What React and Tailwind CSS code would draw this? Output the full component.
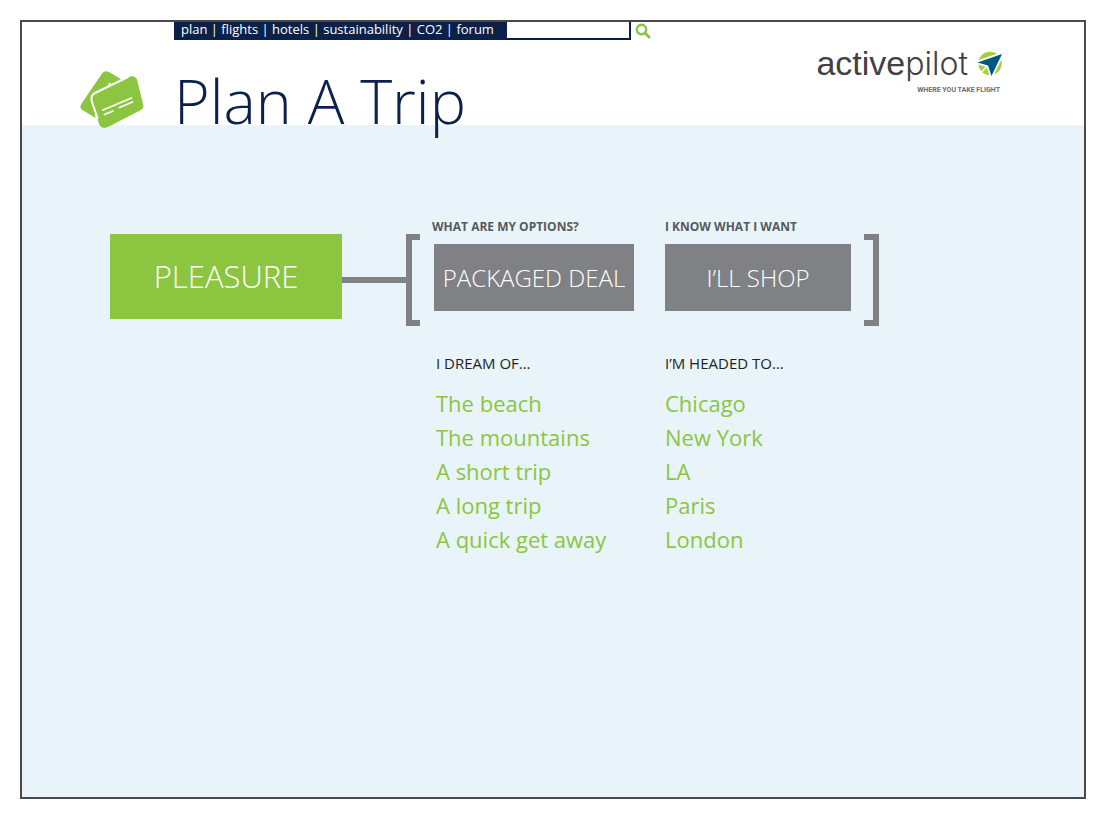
import { useState } from "react";

const navLinks = ["plan", "flights", "hotels", "sustainability", "CO2", "forum"];

const options = [
  {
    question: "WHAT ARE MY OPTIONS?",
    action: "PACKAGED DEAL",
    prompt: "I DREAM OF…",
    choices: ["The beach", "The mountains", "A short trip", "A long trip", "A quick get away"],
    width: "w-[202px]",
    buttonInset: "ml-0.5",
    listInset: "pl-1",
  },
  {
    question: "I KNOW WHAT I WANT",
    action: "I’LL SHOP",
    prompt: "I’M HEADED TO…",
    choices: ["Chicago", "New York", "LA", "Paris", "London"],
    width: "w-[186px]",
    buttonInset: "ml-0",
    listInset: "pl-0",
  },
];

function TicketsIcon() {
  return (
    <svg viewBox="0 0 64 58" className="h-[58px] w-16 shrink-0" aria-hidden="true">
      <path
        d="M22 2.500Q25 -1 29 1L49 13L24 25Q14 28 15.500 47L2.500 39Q-1 37 1.300 33Z"
        fill="#8cc540"
      />
      <path
        d="M30 12.500L20 27M33.500 14.500L26 27"
        stroke="#fff"
        strokeWidth="1.700"
        strokeLinecap="round"
      />
      <path
        d="M14.500 22.500L50 5.500Q55 4 57 8.500L63 33Q64.500 37 60 39.500L29 55.500Q22 59 19.500 54L11.500 31Q10 25.500 14.500 22.500Z"
        fill="#8cc540"
      />
      <path
        d="M17.500 47L12 31Q10 24.500 15 22L48 6"
        fill="none"
        stroke="#fff"
        strokeWidth="2"
        strokeLinecap="round"
      />
      <path
        d="M23 39L51.500 27M24.500 43.500L33 40M39.500 36.500L52.500 31"
        stroke="#fff"
        strokeWidth="1.800"
        strokeLinecap="round"
      />
    </svg>
  );
}

function SearchIcon() {
  return (
    <svg viewBox="0 0 16 16" className="size-4" fill="none" stroke="#8cc540" aria-hidden="true">
      <circle cx="6.500" cy="6.500" r="4.700" strokeWidth="2.400" />
      <path d="M10 10L14 14" strokeWidth="3" strokeLinecap="round" />
    </svg>
  );
}

function PilotMark() {
  return (
    <svg viewBox="0 0 26 26" className="size-[26px]" aria-hidden="true">
      <circle cx="14" cy="12.500" r="11.700" fill="#a6ce39" />
      <path
        d="M26 3L1.500 11.500L12 14.500L15.500 25Z"
        fill="#fff"
        stroke="#fff"
        strokeWidth="3.600"
      />
      <path d="M12 14.500L4 22.500" stroke="#fff" strokeWidth="1.500" />
      <path d="M26 3L1.500 11.500L12 14.500L15.500 25Z" fill="#00587c" />
    </svg>
  );
}

function Logo() {
  return (
    <a href="#" className="flex flex-col items-end text-[#414042]">
      <span className="flex items-center gap-2">
        <span className="text-[34px] leading-9 font-['Liberation_Sans',sans-serif]">
          active<span className="font-light font-['Inter',sans-serif] text-[32px]">pilot</span>
        </span>
        <PilotMark />
      </span>
      <span className="pt-0.5 pr-0.5 text-[7px] leading-3 font-bold text-[#6d6e71] font-['Roboto',sans-serif]">
        WHERE YOU TAKE FLIGHT
      </span>
    </a>
  );
}

function Header() {
  const [query, setQuery] = useState("");

  // relative keeps the title's descender above the panel below
  return (
    <header className="relative flex h-[103px] items-start bg-white pr-[82px] pl-[58px]">
      <div className="pt-[49px]">
        <TicketsIcon />
      </div>
      <div className="ml-[30px]">
        <div className="flex items-center">
          <nav className="flex h-[18px] w-[333px] items-center bg-[#0b2149] pb-[4px] pl-[7px] text-[13px] leading-4 text-white">
            {navLinks.map((link, i) => (
              <span key={link} className="whitespace-pre">
                {i > 0 && " | "}
                <a href="#">{link}</a>
              </span>
            ))}
          </nav>
          <form className="flex items-center" onSubmit={(e) => e.preventDefault()}>
            <input
              type="text"
              aria-label="Search"
              value={query}
              onChange={(e) => setQuery(e.target.value)}
              className="h-[18px] w-[124px] border-r-2 border-b-2 border-[#0b2149] bg-white px-1 text-xs outline-none"
            />
            <button type="submit" aria-label="Search" className="ml-1">
              <SearchIcon />
            </button>
          </form>
        </div>
        <h1 className="mt-[26px] text-[61px] leading-[70px] font-light text-[#0b2149]">Plan A Trip</h1>
      </div>
      <div className="ml-auto pt-[23px]">
        <Logo />
      </div>
    </header>
  );
}

function OptionColumn({ option }) {
  return (
    <section className={option.width}>
      <h2 className="text-xs leading-4 font-bold whitespace-nowrap text-[#58595b]">{option.question}</h2>
      <div className={option.buttonInset}>
        <button
          type="button"
          className="mt-[9px] h-[67px] w-full bg-[#808184] text-2xl font-light whitespace-nowrap text-white"
        >
          {option.action}
        </button>
      </div>
      <div className={option.listInset}>
        <h3 className="mt-[42px] text-[15px] leading-5 text-[#231f20]">{option.prompt}</h3>
        <ul className="mt-[13px] text-[22px] leading-[34px] whitespace-nowrap text-[#8cc540]">
          {option.choices.map((choice) => (
            <li key={choice}>
              <a href="#">{choice}</a>
            </li>
          ))}
        </ul>
      </div>
    </section>
  );
}

export default function App() {
  return (
    <div className="flex min-h-screen bg-white pt-5 pr-[18px] pb-[14px] pl-5 font-['Open_Sans',sans-serif]">
      <div className="flex flex-1 flex-col border-2 border-[#4a4a4c]">
        <Header />
        <main className="flex flex-1 items-start bg-[#e8f4f9] pt-[94px] pl-[88px]">
          <div className="mt-[15px] flex h-[92px] items-start">
            <button type="button" className="h-[85px] w-[232px] bg-[#8cc540] text-[31px] font-light text-white">
              PLEASURE
            </button>
            <div className="h-[6px] w-16 self-center bg-[#808184]" />
            <div className="w-[14px] self-stretch border-6 border-r-0 border-[#808184]" />
          </div>
          <div className="ml-3 flex gap-[31px]">
            {options.map((option) => (
              <OptionColumn key={option.action} option={option} />
            ))}
          </div>
          <div className="mt-[15px] ml-[13px] h-[92px] w-[15px] border-6 border-l-0 border-[#808184]" />
        </main>
      </div>
    </div>
  );
}
